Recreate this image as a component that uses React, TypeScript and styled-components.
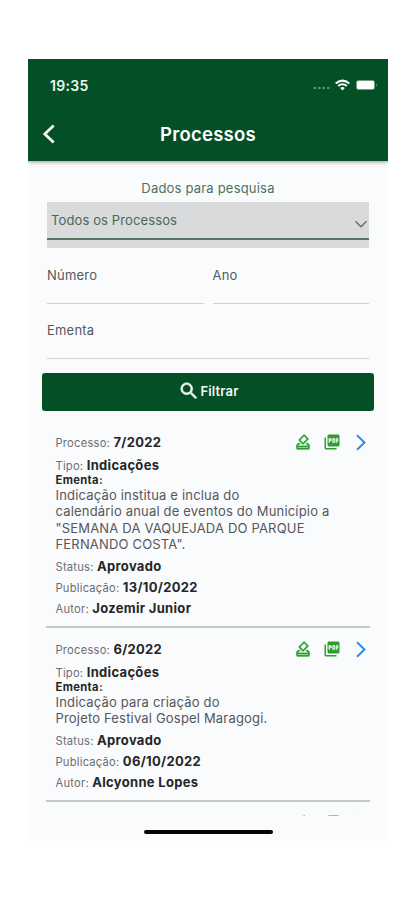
import React from "react";
import styled, { createGlobalStyle } from "styled-components";
import { MdOutlineHowToVote, MdPictureAsPdf, MdSearch } from "react-icons/md";

const GlobalStyle = createGlobalStyle`
  * { box-sizing: border-box; }
  body { margin: 0; background: #fff; font-family: Inter, "Liberation Sans", sans-serif; }
`;

const Page = styled.div`
  width: 415px;
  height: 900px;
  padding: 59px 0 0 28px;
  background: #fff;
  overflow: hidden;
`;

const Phone = styled.main`
  width: 360px;
  height: 782px;
  display: flex;
  flex-direction: column;
  background: #fafbfd;
  overflow: hidden;
`;

const Header = styled.header`
  height: 102px;
  flex: none;
  background: #035026;
  color: #fff;
  box-shadow: 0 1px 4px rgba(40, 30, 50, 0.45);
`;

const StatusBar = styled.div`
  height: 52px;
  padding: 0 11px 0 22px;
  display: flex;
  align-items: center;
  justify-content: space-between;
`;

const Clock = styled.span`
  font-size: 14px;
  font-weight: 600;
  letter-spacing: 0.3px;
  color: #eef7ee;
`;

const Signals = styled.div`
  display: flex;
  align-items: center;
`;

const TitleBar = styled.div`
  height: 46px;
  display: grid;
  grid-template-columns: 60px 1fr 60px;
  align-items: center;
`;

const BackButton = styled.button`
  display: flex;
  padding: 0 0 0 14px;
  border: 0;
  background: none;
`;

const Title = styled.h1`
  margin: 0;
  text-align: center;
  font-size: 18.5px;
  font-weight: 600;
  letter-spacing: 0.25px;
`;

const Form = styled.form`
  flex: none;
  height: 260px;
  padding: 18px 14px 0;
`;

const Caption = styled.div`
  height: 23px;
  line-height: 19px;
  text-align: center;
  font-size: 13px;
  letter-spacing: 0.2px;
  color: #49735f;
`;

const SelectBox = styled.div`
  height: 46px;
  margin: 0 5px;
  border-bottom: 7px solid #d9dbdc;
  background: #d9dadb;
`;

const SelectValue = styled.div`
  height: 38px;
  padding: 0 0 0 4px;
  display: flex;
  justify-content: space-between;
  border-bottom: 2px solid #567668;
  font-size: 13px;
  line-height: 36px;
  letter-spacing: 0.12px;
  color: #49685a;

  svg { margin-top: 18px; }
`;

const FieldRow = styled.div<{ $height: number }>`
  height: ${(p) => p.$height}px;
  margin: 0 5px;
  display: flex;
  gap: 9px;
  align-items: flex-end;
`;

const Field = styled.label`
  flex: 1;
  height: 38px;
  border-bottom: 1px solid #cfd1d3;
  font-size: 13px;
  line-height: 18px;
  letter-spacing: 0.2px;
  color: #56585a;
`;

const FilterButton = styled.button`
  width: 332px;
  height: 38px;
  margin-top: 14px;
  padding: 0 0 2px;
  display: flex;
  align-items: center;
  justify-content: center;
  gap: 1px;
  border: 0;
  border-radius: 3px;
  background: #035026;
  color: #f4faf4;
  font: 600 13px Inter, sans-serif;
  letter-spacing: 0.15px;

  svg { stroke: currentColor; stroke-width: 0.6; }
  svg path[fill="none"] { stroke: none; }
`;

const List = styled.div`
  height: 395px;
  flex: none;
  margin: 0 18px;
  overflow: hidden;
`;

const Card = styled.article`
  padding: 8px 0 7px 9.5px;
  border-bottom: 2px solid #c3c8c7;
`;

const CardTop = styled.div`
  height: 26px;
  display: flex;
  align-items: center;
  justify-content: space-between;
  margin-bottom: 1px;
`;

const Actions = styled.div`
  display: flex;
  align-items: center;
  color: #2ca02f;
`;

const ActionIcon = styled.span<{ $gap: number }>`
  display: flex;
  margin-right: ${(p) => p.$gap}px;

  path[fill="none"] { stroke: none; }
`;

const Line = styled.div<{ $height: number }>`
  height: ${(p) => p.$height}px;
  line-height: ${(p) => p.$height}px;
  white-space: nowrap;
`;

const TopLine = styled(Line)`
  margin-top: -2px;
`;

const Label = styled.span`
  font-size: 11.2px;
  letter-spacing: 0.22px;
  color: #6c6e70;
`;

const Value = styled.b`
  font-size: 13px;
  font-weight: 650;
  letter-spacing: 0.32px;
  color: #252627;
`;

const SummaryTitle = styled.div`
  height: 15px;
  line-height: 17px;
  font-size: 11.2px;
  font-weight: 700;
  letter-spacing: 0.35px;
  color: #252627;
`;

const Summary = styled.p`
  margin: 0 0 2px;
  font-size: 13px;
  line-height: 16.4px;
  letter-spacing: 0.18px;
  white-space: pre-line;
  color: #55575a;
`;

const Details = styled.div`
  height: 64.4px;
`;

const HomeArea = styled.div`
  flex: 1;
  display: flex;
  justify-content: center;
  padding-top: 14px;
`;

const HomeIndicator = styled.div`
  width: 129px;
  height: 4px;
  border-radius: 2px;
  background: #050505;
`;

type Process = {
  number: string;
  kind: string;
  summary: string;
  status: string;
  date: string;
  author: string;
};

const processes: Process[] = [
  {
    number: "7/2022",
    kind: "Indicações",
    summary:
      'Indicação institua e inclua do\ncalendário anual de eventos do Município a\n"SEMANA DA VAQUEJADA DO PARQUE\nFERNANDO COSTA".',
    status: "Aprovado",
    date: "13/10/2022",
    author: "Jozemir Junior",
  },
  {
    number: "6/2022",
    kind: "Indicações",
    summary: "Indicação para criação do\nProjeto Festival Gospel Maragogi.",
    status: "Aprovado",
    date: "06/10/2022",
    author: "Alcyonne Lopes",
  },
];

function CardActions() {
  return (
    <Actions>
      <ActionIcon $gap={11}>
        <MdOutlineHowToVote size={18} stroke="currentColor" strokeWidth={0.4} />
      </ActionIcon>
      <ActionIcon $gap={15}>
        <MdPictureAsPdf size={18} />
      </ActionIcon>
      <ActionIcon $gap={4}>
        <svg width="10" height="17" viewBox="0 0 10 17" fill="none" stroke="#2b8be8" strokeWidth="1.9">
          <path d="M1 1.2 8.5 8.5 1 15.8" />
        </svg>
      </ActionIcon>
    </Actions>
  );
}

function ProcessCard({ item }: { item: Process }) {
  return (
    <Card>
      <CardTop>
        <TopLine $height={26}>
          <Label>Processo: </Label>
          <Value>{item.number}</Value>
        </TopLine>
        <CardActions />
      </CardTop>
      <Line $height={16}>
        <Label>Tipo: </Label>
        <Value>{item.kind}</Value>
      </Line>
      <SummaryTitle>Ementa:</SummaryTitle>
      <Summary>{item.summary}</Summary>
      <Details>
        <Line $height={21}>
          <Label>Status: </Label>
          <Value>{item.status}</Value>
        </Line>
        <Line $height={21}>
          <Label>Publicação: </Label>
          <Value>{item.date}</Value>
        </Line>
        <Line $height={21}>
          <Label>Autor: </Label>
          <Value>{item.author}</Value>
        </Line>
      </Details>
    </Card>
  );
}

export default function App() {
  return (
    <>
      <GlobalStyle />
      <Page>
        <Phone>
          <Header>
            <StatusBar>
              <Clock>19:35</Clock>
              <Signals>
                <svg width="64" height="14" viewBox="0 0 64 14">
                  <g fill="#5f8f72">
                    <rect x="0.5" y="9" width="2.6" height="2" />
                    <rect x="5" y="9" width="2.6" height="2" />
                    <rect x="9.5" y="9" width="2.6" height="2" />
                    <rect x="14" y="9" width="2.6" height="2" />
                  </g>
                  <g fill="none" stroke="#fff" strokeWidth="2.1">
                    <path d="M22.7 5.5q6.8-5.6 13.6 0" />
                    <path d="M25.2 8q4.3-3.5 8.6 0" />
                  </g>
                  <path d="M27.2 10q2.3-1.8 4.6 0l-2.3 2.6z" fill="#fff" />
                  <rect x="43.5" y="2.5" width="18" height="9" rx="2" fill="#fff" stroke="#6d9c7f" />
                  <path d="M63 5.5q1.5 1.5 0 3z" fill="#8fb59c" />
                </svg>
              </Signals>
            </StatusBar>
            <TitleBar>
              <BackButton type="button" aria-label="Voltar">
                <svg width="14" height="20" viewBox="0 0 14 20" fill="none" stroke="#f2f8f2" strokeWidth="2.8">
                  <path d="M11.7 1.5 2.8 10l8.9 8.5" />
                </svg>
              </BackButton>
              <Title>Processos</Title>
            </TitleBar>
          </Header>
          <Form>
            <Caption>Dados para pesquisa</Caption>
            <SelectBox>
              <SelectValue>
                Todos os Processos
                <svg width="15" height="9" viewBox="0 0 15 9" fill="none" stroke="#66696b" strokeWidth="1.4">
                  <path d="M1.5 1.2 7 6.8l5.5-5.6" />
                </svg>
              </SelectValue>
            </SelectBox>
            <FieldRow $height={56}>
              <Field>Número</Field>
              <Field>Ano</Field>
            </FieldRow>
            <FieldRow $height={55}>
              <Field>Ementa</Field>
            </FieldRow>
            <FilterButton type="button">
              <MdSearch size={22} />
              Filtrar
            </FilterButton>
          </Form>
          <List>
            {processes.map((item) => (
              <ProcessCard key={item.number} item={item} />
            ))}
            <Card>
              <CardTop>
                <span />
                <CardActions />
              </CardTop>
            </Card>
          </List>
          <HomeArea>
            <HomeIndicator />
          </HomeArea>
        </Phone>
      </Page>
    </>
  );
}
